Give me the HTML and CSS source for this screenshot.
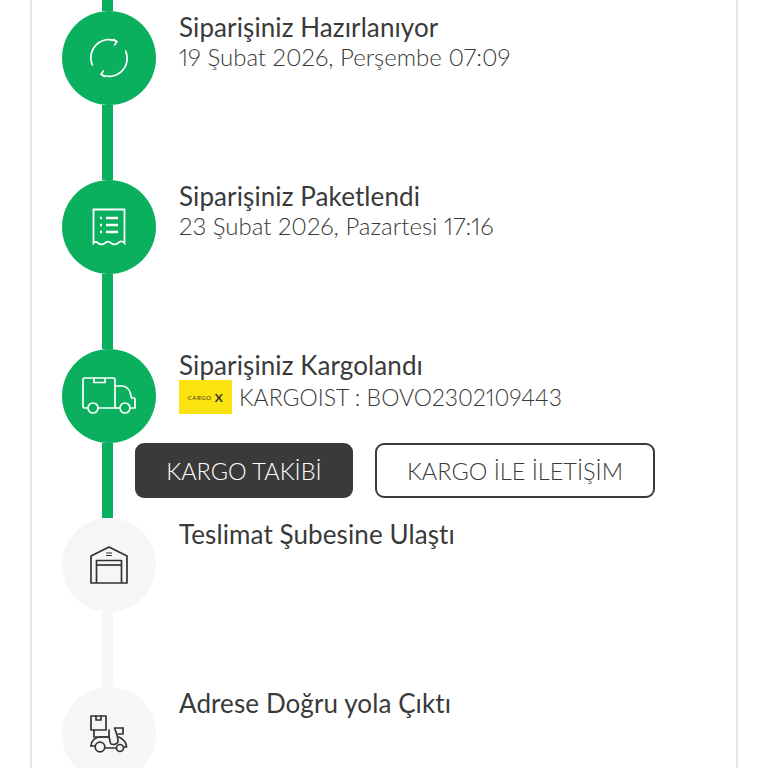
FILE: index.html
```html
<!DOCTYPE html>
<html lang="tr">
<head>
    <meta charset="UTF-8">
    <meta name="viewport" content="width=device-width, initial-scale=1.0">
    <title>Sipariş Takibi</title>
    <link rel="stylesheet" href="styles.css">
</head>
<body>
    <main class="card">
        <div class="stub"></div>

        <div class="step done">
            <div class="rail">
                <div class="dot">
                    <svg width="40" height="40" viewBox="0 0 40 40" fill="none" stroke="#fff" stroke-width="1.6" stroke-linecap="round" stroke-linejoin="round">
                        <path d="M3.4 27A18 18 0 0 1 28 3.6"/>
                        <path d="M24.5 1.5L28 3.6L25.6 7"/>
                        <path d="M36.6 13A18 18 0 0 1 12 36.4"/>
                        <path d="M15.5 38.5L12 36.4L14.4 33"/>
                    </svg>
                </div>
                <div class="line"></div>
            </div>
            <div class="info">
                <h3>Siparişiniz Hazırlanıyor</h3>
                <p>19 Şubat 2026, Perşembe 07:09</p>
            </div>
        </div>

        <div class="step done">
            <div class="rail">
                <div class="dot">
                    <svg width="34" height="38" viewBox="0 0 34 38" fill="none" stroke="#fff" stroke-width="1.8">
                        <path d="M1.5 1.5H32.5V35C30 32.5 28.5 32.5 26 35C23.5 37 21.5 37 19 35C16.5 33 15 33 13 35C10.5 37 8.5 37 6 35C4.5 33.5 3 33.5 1.5 35Z"/>
                        <path d="M8 10H10M8 17H10M8 24H10M14 10H26M14 17H26M14 24H26" stroke-width="2.4"/>
                    </svg>
                </div>
                <div class="line"></div>
            </div>
            <div class="info">
                <h3>Siparişiniz Paketlendi</h3>
                <p>23 Şubat 2026, Pazartesi 17:16</p>
            </div>
        </div>

        <div class="step done">
            <div class="rail">
                <div class="dot">
                    <svg width="54" height="38" viewBox="0 0 54 38" fill="none" stroke="#fff" stroke-width="1.7" stroke-linejoin="round">
                        <path d="M6 31H2.5C1.5 31 1 30.500 1 29.500V2.500C1 1.500 1.500 1 2.500 1H31.500C32.500 1 33 1.500 33 2.500V31H16"/>
                        <path d="M12 1V5.500H23V1"/>
                        <path d="M33 9H40C45 9 48.500 14 49.500 21H52C52.500 21 53 21.500 53 22V31H48"/>
                        <path d="M38 31H33"/>
                        <circle cx="11" cy="31" r="5"/>
                        <circle cx="43" cy="31" r="5"/>
                    </svg>
                </div>
                <div class="line"></div>
            </div>
            <div class="info">
                <h3>Siparişiniz Kargolandı</h3>
                <div class="cargo">
                    <span class="logo">CARGO <b>X</b></span>
                    <p>KARGOIST : BOVO2302109443</p>
                </div>
                <div class="actions">
                    <a class="btn btn-dark">KARGO TAKİBİ</a>
                    <a class="btn btn-outline">KARGO İLE İLETİŞİM</a>
                </div>
            </div>
        </div>

        <div class="step">
            <div class="rail">
                <div class="dot">
                    <svg width="38" height="38" viewBox="0 0 38 38" fill="none" stroke="#333" stroke-width="1.7" stroke-linejoin="round">
                        <path d="M1 37V10L19 1L37 10V37Z"/>
                        <path d="M6.500 37V14.500H31.500V37"/>
                        <path d="M6.500 19H31.500"/>
                        <path d="M16 7H22M16 9.500H22" stroke-width="1.200"/>
                    </svg>
                </div>
                <div class="line"></div>
            </div>
            <div class="info">
                <h3>Teslimat Şubesine Ulaştı</h3>
            </div>
        </div>

        <div class="step">
            <div class="rail">
                <div class="dot">
                    <svg width="38" height="38" viewBox="0 0 38 38" fill="none" stroke="#333" stroke-width="1.700" stroke-linejoin="round" stroke-linecap="round">
                        <path d="M1 1H16V15H1Z"/>
                        <path d="M6 1V5H11V1"/>
                        <path d="M4 15V22H19V15"/>
                        <path d="M1 31C1 26 5 22 11 22H19C20 25 20 28 21 29C24 30 27 29 28 27C28.500 23 26 17 24.500 13H33"/>
                        <path d="M33 13V19H28"/>
                        <path d="M1 31H5M15 33H26M29 22C33 24 36.500 28 36.500 32H34"/>
                        <circle cx="10" cy="32" r="4.800"/>
                        <circle cx="30" cy="33" r="3.500"/>
                    </svg>
                </div>
            </div>
            <div class="info">
                <h3>Adrese Doğru yola Çıktı</h3>
            </div>
        </div>
    </main>
</body>
</html>
```

FILE: styles.css
```css
html,
body {
    height: 100%;
    margin: 0;
    padding: 0;
    overflow: hidden;
    background-color: #ffffff;
}

body {
    font-family: 'Lato', 'Open Sans', sans-serif;
    font-variant-numeric: proportional-nums;
    color: #3a3a3a;
}

.card {
    width: 674px;
    height: 768px;
    margin-left: 30px;
    padding-left: 30px;
    border-left: 2px solid #e4e4e4;
    border-right: 2px solid #e4e4e4;
}

.stub {
    width: 11px;
    height: 11px;
    margin-left: 40px;
    background-color: #0bb05f;
}

.step {
    display: flex;
    gap: 23px;
    height: 169px;
}

.rail {
    display: flex;
    flex-direction: column;
    width: 94px;
    flex-shrink: 0;
}

.dot {
    display: flex;
    align-items: center;
    justify-content: center;
    width: 94px;
    height: 94px;
    border-radius: 50%;
    background-color: #f6f6f6;
    flex-shrink: 0;
}

.line {
    flex: 1;
    width: 11px;
    margin-left: 40px;
    background-color: #f6f6f6;
}

.step.done .dot,
.step.done .line {
    background-color: #0bb05f;
}

.info h3 {
    margin: 0;
    padding-top: 1px;
    font-size: 26px;
    line-height: 30px;
    font-weight: 400;
    letter-spacing: 0.1px;
}

.info p {
    margin: 0;
    font-size: 24px;
    line-height: 30px;
    font-weight: 300;
}

.cargo {
    display: flex;
    align-items: center;
    gap: 7px;
    height: 34px;
}

.cargo p {
    font-size: 23px;
}

.logo {
    display: flex;
    align-items: center;
    justify-content: center;
    gap: 3px;
    width: 53px;
    height: 34px;
    background-color: #fbe30f;
    color: #333333;
    font-size: 6px;
    letter-spacing: 0.6px;
    white-space: nowrap;
}

.logo b {
    font-size: 12px;
}

.actions {
    display: flex;
    gap: 22px;
    margin: 29px 0 0 -44px;
}

.btn {
    display: flex;
    align-items: center;
    justify-content: center;
    height: 55px;
    box-sizing: border-box;
    border-radius: 9px;
    font-size: 23.5px;
    font-weight: 300;
}

.btn-dark {
    width: 218px;
    background-color: #3a3a3a;
    color: #ffffff;
}

.btn-outline {
    width: 280px;
    border: 2px solid #3a3a3a;
}
```
